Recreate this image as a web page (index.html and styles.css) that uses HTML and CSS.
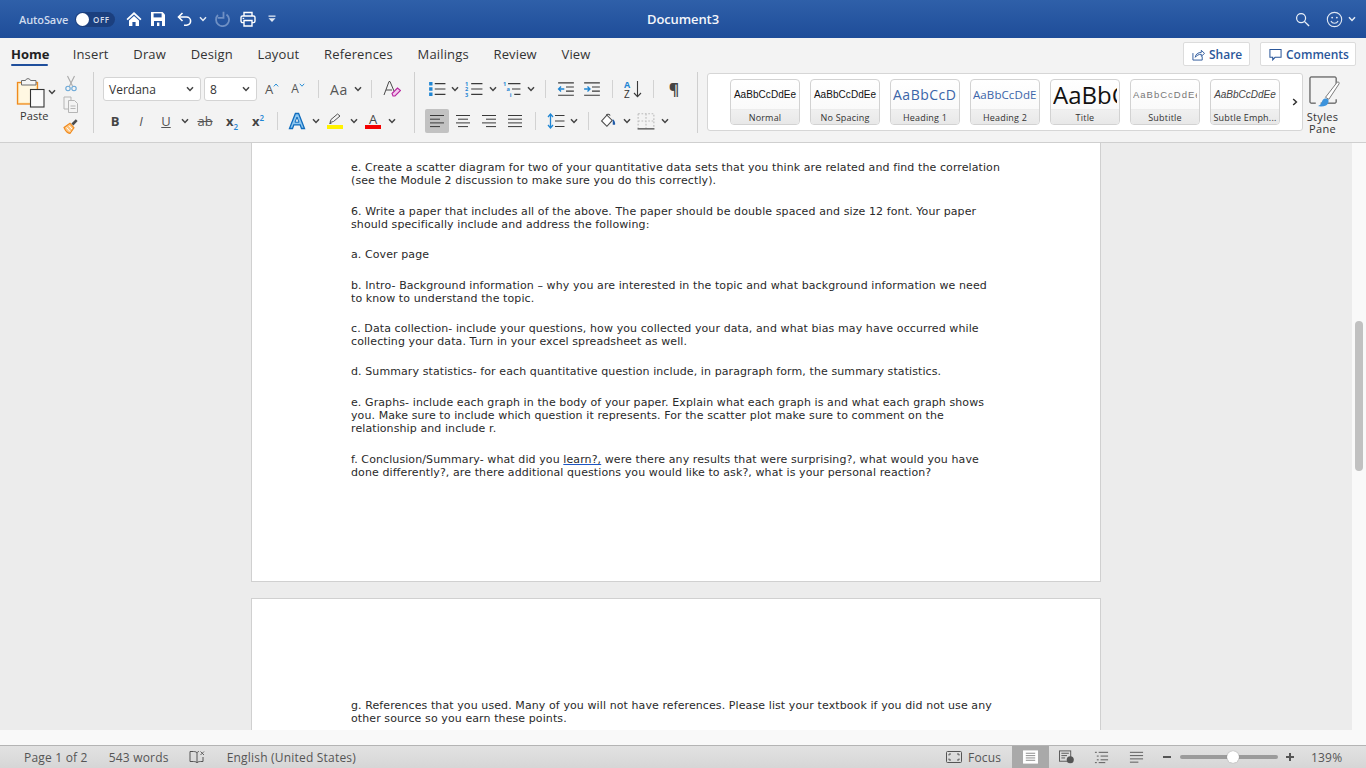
FILE: index.html
```html
<!DOCTYPE html>
<html lang="en">
<head>
<meta charset="utf-8">
<title>Document3</title>
<link rel="stylesheet" href="styles.css">
</head>
<body>
<svg class="defs" width="0" height="0" aria-hidden="true">
  <symbol id="chev" viewBox="0 0 8 6"><path d="M1 1.2 4 4.4 7 1.2" fill="none" stroke="currentColor" stroke-width="1.5"/></symbol>
  <symbol id="lines-left" viewBox="0 0 16 14"><path d="M1 1.5h14M1 5.2h10M1 8.9h14M1 12.6h10" fill="none" stroke="#3a3a3a" stroke-width="1"/></symbol>
  <symbol id="lines-center" viewBox="0 0 16 14"><path d="M1 1.5h14M3 5.2h10M1 8.9h14M3 12.6h10" fill="none" stroke="#3a3a3a" stroke-width="1"/></symbol>
  <symbol id="lines-right" viewBox="0 0 16 14"><path d="M1 1.5h14M5 5.2h10M1 8.9h14M5 12.6h10" fill="none" stroke="#3a3a3a" stroke-width="1"/></symbol>
  <symbol id="lines-just" viewBox="0 0 16 14"><path d="M1 1.5h14M1 5.2h14M1 8.9h14M1 12.6h14" fill="none" stroke="#3a3a3a" stroke-width="1"/></symbol>
</svg>

<header class="titlebar">
  <div class="qat">
    <span class="autosave">AutoSave</span>
    <span class="toggle"><span class="knob"></span><span class="off">OFF</span></span>
    <svg class="qi home" viewBox="0 0 16 16"><path d="M8 1 0.5 8l1.2 1.2L8 3.4l6.3 5.8L15.500 8z" fill="#fff"/><path d="M3 9.600 8 5l5 4.600V15H9.600v-4H6.400v4H3z" fill="#fff"/></svg>
    <svg class="qi save" viewBox="0 0 16 16"><path d="M1 1h11.500L15 3.500V15H1z" fill="#fff"/><rect x="3.600" y="2.400" width="8" height="4" fill="#24549f"/><rect x="4" y="10" width="8" height="5" fill="#24549f"/><rect x="7" y="11.500" width="2.400" height="3.500" fill="#fff"/></svg>
    <svg class="qi undo" viewBox="0 0 16 16"><path d="M5.500 2 1.500 6l4 4" fill="none" stroke="#fff" stroke-width="1.600"/><path d="M2 6h7.500a4 4 0 0 1 0 8.200H7" fill="none" stroke="#fff" stroke-width="1.600"/></svg>
    <svg class="chev qchev"><use href="#chev"/></svg>
    <svg class="qi redo" viewBox="0 0 16 16"><path d="M4 4A6.500 6.500 0 1 0 12.500 3.500" fill="none" stroke="#6f90c4" stroke-width="1.800"/><path d="M9.500 .8v6H3.800" fill="none" stroke="#6f90c4" stroke-width="1.800"/></svg>
    <svg class="qi print" viewBox="0 0 16 16"><path d="M4 5V1.500h8V5" fill="none" stroke="#fff" stroke-width="1.400"/><rect x="1" y="5" width="14" height="6.600" rx="1.500" fill="none" stroke="#fff" stroke-width="1.400"/><path d="M4 9.500h8V15H4z" fill="#24549f" stroke="#fff" stroke-width="1.400"/><rect x="2.600" y="6.800" width="1.600" height="1.200" fill="#fff"/></svg>
    <svg class="custom" viewBox="0 0 8 8"><rect x="0.500" y="0.500" width="7" height="1.300" fill="#dfe7f3"/><path d="M0.500 3.200h7L4 7z" fill="#dfe7f3"/></svg>
  </div>
  <div class="doc-title">Document3</div>
  <div class="account">
    <svg class="search" viewBox="0 0 16 16"><circle cx="6.500" cy="6.500" r="4.800" fill="none" stroke="#eaf0f8" stroke-width="1.300"/><path d="M10 10l5 5" stroke="#eaf0f8" stroke-width="1.500"/></svg>
    <svg class="smile" viewBox="0 0 18 18"><circle cx="9" cy="9" r="7.600" fill="none" stroke="#dfe7f3" stroke-width="1.200"/><circle cx="6.500" cy="7" r="1" fill="#dfe7f3"/><circle cx="11.500" cy="7" r="1" fill="#dfe7f3"/><path d="M5.200 10.500a4.200 4.200 0 0 0 7.600 0" fill="none" stroke="#dfe7f3" stroke-width="1.200"/></svg>
    <svg class="chev achev"><use href="#chev"/></svg>
  </div>
</header>

<nav class="tabs">
  <div class="tablist">
    <span class="tab active">Home</span>
    <span class="tab">Insert</span>
    <span class="tab">Draw</span>
    <span class="tab">Design</span>
    <span class="tab">Layout</span>
    <span class="tab">References</span>
    <span class="tab">Mailings</span>
    <span class="tab">Review</span>
    <span class="tab">View</span>
  </div>
  <div class="share-group">
    <span class="action share">
      <svg class="action-icon" viewBox="0 0 14 14"><path d="M1 5.500V13h10V9" fill="none" stroke="#2b579a" stroke-width="1"/><path d="M3.500 10c.4-3.500 3-5.200 6.500-5.200V2.500L13.500 5.800 10 9V6.800C7.500 6.800 5.200 7.600 3.500 10z" fill="none" stroke="#2b579a" stroke-width="1"/></svg>
      Share
    </span>
    <span class="action comments">
      <svg class="action-icon" viewBox="0 0 14 14"><path d="M1 1.500h12v8.500H6.500L4 12.800V10H1z" fill="none" stroke="#2b579a" stroke-width="1.100"/></svg>
      Comments
    </span>
  </div>
</nav>

<section class="ribbon">
  <div class="group paste-group">
    <div class="paste">
      <svg class="paste-icon" viewBox="0 0 30 32">
        <rect x="1.500" y="6.500" width="20" height="21.500" fill="#fde9b8" stroke="#f08a1d" stroke-width="1.300"/>
        <rect x="3.200" y="8" width="16.600" height="18.500" fill="#fff7e2"/>
        <path d="M5.500 9V4.500h4a2.600 2.600 0 0 1 5 0H20V9z" fill="#f5f5f5" stroke="#6d6d6d" stroke-width="1"/>
        <rect x="14.500" y="13.500" width="13.500" height="17.500" fill="#fafafa" stroke="#333" stroke-width="1.100"/>
      </svg>
      <svg class="chev paste-chev"><use href="#chev"/></svg>
      <span class="paste-label">Paste</span>
    </div>
    <div class="clip">
      <svg class="clip-icon" viewBox="0 0 16 17"><path d="M4.500 1 9.500 11M11.500 1 6.500 11" stroke="#a9a9a9" stroke-width="1.100"/><circle cx="5" cy="13.500" r="2.200" fill="none" stroke="#6aa8d8" stroke-width="1.100"/><circle cx="11" cy="13.500" r="2.200" fill="none" stroke="#6aa8d8" stroke-width="1.100"/></svg>
      <svg class="clip-icon" viewBox="0 0 16 17"><path d="M1 1h7v3M1 1v12h4" fill="none" stroke="#b5b5b5" stroke-width="1"/><path d="M5.500 4.500h6l3 3v9h-9z" fill="none" stroke="#b5b5b5" stroke-width="1"/><path d="M7.500 10h5M7.500 12.500h5" stroke="#b5b5b5"/></svg>
      <svg class="clip-icon" viewBox="0 0 16 17"><path d="M1 10.500 7 6.200l4 4.600-4 5.600c-2-.2-4.600-2.400-6-5.900z" fill="#fdc37c" stroke="#f08a1d" stroke-width="1.100"/><path d="M3.500 10.500l3.600 4M6 8.700l3 3.400" stroke="#fff" stroke-width="1"/><path d="M8.400 6.600 12.800 2.200l1.800 1.800-4.200 4.600z" fill="#4b4b4b"/></svg>
    </div>
  </div>
  <span class="vrule"></span>

  <div class="group font-group">
    <div class="row">
      <span class="select font-select">Verdana<svg class="chev sel-chev"><use href="#chev"/></svg></span>
      <span class="select size-select">8<svg class="chev sel-chev"><use href="#chev"/></svg></span>
      <span class="slot w30"><span class="big-a">A</span><svg class="caret" viewBox="0 0 6 4"><path d="M.8 3.400 3 1l2.200 2.400" fill="none" stroke="#2a8fd6" stroke-width="1"/></svg></span>
      <span class="slot w22"><span class="big-a small">A</span><svg class="caret" viewBox="0 0 6 4"><path d="M.8.8 3 3.200 5.200.8" fill="none" stroke="#2a8fd6" stroke-width="1"/></svg></span>
      <span class="rule ml9"></span>
      <span class="slot w30 ml5 aa">Aa</span>
      <span class="slot w8"><svg class="chev"><use href="#chev"/></svg></span>
      <span class="rule ml9"></span>
      <span class="slot w30 ml5">
        <svg class="icon18" viewBox="0 0 18 18"><path d="M1 15 6 1.500h1L11 11M3 10h6" fill="none" stroke="#4a4a4a" stroke-width="1"/><path d="M9 13.500 14.500 8l3 2.500-5.500 5.500H10z" fill="#f3c9ee" stroke="#b8249f" stroke-width="1.100"/></svg>
      </span>
    </div>
    <div class="row fmt">
      <span class="slot w24 bold">B</span>
      <span class="slot w28 ital">I</span>
      <span class="slot w22 under">U</span>
      <span class="slot w16"><svg class="chev"><use href="#chev"/></svg></span>
      <span class="slot w24 strike">ab</span>
      <span class="slot w30 script"><span>x<sub>2</sub></span></span>
      <span class="slot w22 script"><span>x<sup>2</sup></span></span>
      <span class="rule ml8"></span>
      <span class="slot w38">
        <svg class="icon18" viewBox="0 0 18 18"><path d="M1.500 16.500 7.400 1.500h3.200l5.900 15h-3l-1.300-3.600H5.800l-1.300 3.600z" fill="#8cc6f0" stroke="#0f6cbd" stroke-width="1.300"/><path d="M7 10.200h4L9 5z" fill="#f3f3f3" stroke="#0f6cbd"/></svg>
      </span>
      <span class="slot w0"><svg class="chev"><use href="#chev"/></svg></span>
      <span class="slot w38">
        <span class="colour">
          <svg class="pen" viewBox="0 0 14 11"><path d="M2 9.500 3 6.500 9.500 1l2.500 2-6.500 5.500z" fill="none" stroke="#555" stroke-width="1"/><path d="M2 9.500 1 11h3z" fill="#555"/></svg>
          <span class="bar yellow"></span>
        </span>
      </span>
      <span class="slot w0"><svg class="chev"><use href="#chev"/></svg></span>
      <span class="slot w38">
        <span class="colour"><span class="colour-a">A</span><span class="bar red"></span></span>
      </span>
      <span class="slot w0"><svg class="chev"><use href="#chev"/></svg></span>
    </div>
  </div>
  <span class="vrule"></span>

  <div class="group para-group">
    <div class="row para-top">
      <span class="slot w24 ml10">
        <svg class="icon18" viewBox="0 0 16 14"><path d="M1 .8h3v3H1zM1 5.500h3v3H1zM1 10.200h3v3H1z" fill="#1f86d4"/><path d="M6 2.200h9.500M6 7h9.500M6 11.700h9.500" stroke="#3a3a3a" stroke-width="1.100"/></svg>
      </span>
      <span class="slot w12"><svg class="chev"><use href="#chev"/></svg></span>
      <span class="slot w26">
        <svg class="icon18" viewBox="0 0 16 14"><text x="0" y="4.400" class="tiny">1</text><text x="0" y="9.200" class="tiny">2</text><text x="0" y="14" class="tiny">3</text><path d="M5.500 2.200h10M5.500 7h10M5.500 11.700h10" stroke="#3a3a3a" stroke-width="1.100"/></svg>
      </span>
      <span class="slot w12"><svg class="chev"><use href="#chev"/></svg></span>
      <span class="slot w26">
        <svg class="icon18" viewBox="0 0 16 14"><text x="0" y="4.400" class="tiny">1</text><text x="3" y="9.200" class="tiny">a</text><text x="6" y="14" class="tiny">i</text><path d="M4.500 2.200h11M8 7h7.500M10 11.700h5.500" stroke="#3a3a3a" stroke-width="1.100"/></svg>
      </span>
      <span class="slot w12"><svg class="chev"><use href="#chev"/></svg></span>
      <span class="rule ml8"></span>
      <span class="slot w26 ml7">
        <svg class="icon18" viewBox="0 0 16 14"><path d="M1 1.500h14M8 5.200h7M8 8.900h7M1 12.600h14" stroke="#3a3a3a"/><path d="M6.500 7H1.500M3.600 4.800 1.400 7l2.200 2.200" fill="none" stroke="#1f86d4" stroke-width="1.200"/></svg>
      </span>
      <span class="slot w26">
        <svg class="icon18" viewBox="0 0 16 14"><path d="M1 1.500h14M8 5.200h7M8 8.900h7M1 12.600h14" stroke="#3a3a3a"/><path d="M1 7h5M4 4.800 6.200 7 4 9.200" fill="none" stroke="#1f86d4" stroke-width="1.200"/></svg>
      </span>
      <span class="rule ml7"></span>
      <span class="slot w40">
        <svg class="sort" viewBox="0 0 18 18"><text x="0" y="8" class="sort-a">A</text><text x="0" y="17.500" class="sort-z">Z</text><path d="M13.500 1v15.500M10 13l3.500 3.700L17 13" fill="none" stroke="#3a3a3a" stroke-width="1.100"/></svg>
      </span>
      <span class="rule"></span>
      <span class="slot w40 pilcrow">¶</span>
    </div>
    <div class="row para-bottom">
      <span class="align on"><svg class="icon16"><use href="#lines-left"/></svg></span>
      <span class="align"><svg class="icon16"><use href="#lines-center"/></svg></span>
      <span class="align"><svg class="icon16"><use href="#lines-right"/></svg></span>
      <span class="align"><svg class="icon16"><use href="#lines-just"/></svg></span>
      <span class="rule ml8"></span>
      <span class="slot w28 ml6">
        <svg class="icon18" viewBox="0 0 18 16"><path d="M3.500 1v14M1 4l2.500-3L6 4M1 12l2.500 3L6 12" fill="none" stroke="#1f86d4" stroke-width="1.300"/><path d="M8 2.500h9.500M8 8h9.500M8 13.500h9.500" stroke="#3a3a3a" stroke-width="1.100"/></svg>
      </span>
      <span class="slot w8"><svg class="chev"><use href="#chev"/></svg></span>
      <span class="rule ml10"></span>
      <span class="slot w38">
        <svg class="bucket" viewBox="0 0 16 15"><path d="M6.500 2 1.500 7.500 6.500 12.500l5-5.500z" fill="#fff" stroke="#4a4a4a"/><path d="M6 2c1-1.500 3-1 3.500.5" fill="none" stroke="#4a4a4a"/><path d="M12 5.500c1.800 1.500 2.500 3.500 2.200 5.500H12z" fill="#1e5aa8"/></svg>
      </span>
      <span class="slot w0"><svg class="chev"><use href="#chev"/></svg></span>
      <span class="slot w38">
        <svg class="icon18" viewBox="0 0 16 15"><path d="M1 1h14v13" fill="none" stroke="#bdbdbd" stroke-dasharray="1.500 1.500"/><path d="M1 1v13M8 1v13M1 7.500h14" fill="none" stroke="#bdbdbd" stroke-dasharray="1.500 1.500"/><path d="M.5 14.500h15" stroke="#333"/></svg>
      </span>
      <span class="slot w0"><svg class="chev"><use href="#chev"/></svg></span>
    </div>
  </div>
  <span class="vrule"></span>

  <div class="gallery">
    <div class="card"><div class="sample s-normal">AaBbCcDdEe</div><div class="card-label">Normal</div></div>
    <div class="card"><div class="sample s-normal">AaBbCcDdEe</div><div class="card-label">No Spacing</div></div>
    <div class="card"><div class="sample s-h1">AaBbCcDdEe</div><div class="card-label">Heading 1</div></div>
    <div class="card"><div class="sample s-h2">AaBbCcDdEe</div><div class="card-label">Heading 2</div></div>
    <div class="card"><div class="sample s-title">AaBbCcDdEe</div><div class="card-label">Title</div></div>
    <div class="card"><div class="sample s-sub">AaBbCcDdEe</div><div class="card-label">Subtitle</div></div>
    <div class="card"><div class="sample s-emph">AaBbCcDdEe</div><div class="card-label">Subtle Emph...</div></div>
    <svg class="chev gallery-next"><use href="#chev"/></svg>
  </div>
  <div class="styles-pane">
    <svg class="pane-icon" viewBox="0 0 32 32">
      <path d="M2 1h25a1 1 0 0 1 1 1v6M28 24v3a1 1 0 0 1-1 1H12M7 28H2a1 1 0 0 1-1-1V2a1 1 0 0 1 1-1" fill="none" stroke="#333" stroke-width="1"/>
      <path d="M17 22 29 6.500c1-1.200 2.800.3 2 1.600L20.500 24z" fill="#fff" stroke="#777" stroke-width="1"/>
      <path d="M9 31c3-.5 3.600-3 5-6 1-2 4-2.500 5.500-1 1.500 2 .5 5-2 6.500-2.500 1-6 1.200-8.500.5z" fill="#3c93dc"/>
    </svg>
    <span>Styles</span>
    <span>Pane</span>
  </div>
</section>

<main class="workspace">
  <div class="doc">
    <article class="page page-one">
      <p>e. Create a scatter diagram for two of your quantitative data sets that you think are related and find the correlation<br>(see the Module 2 discussion to make sure you do this correctly).</p>
      <p class="tight">6. Write a paper that includes all of the above. The paper should be double spaced and size 12 font. Your paper<br>should specifically include and address the following:</p>
      <p>a. Cover page</p>
      <p class="tight">b. Intro- Background information – why you are interested in the topic and what background information we need<br>to know to understand the topic.</p>
      <p class="tight">c. Data collection- include your questions, how you collected your data, and what bias may have occurred while<br>collecting your data. Turn in your excel spreadsheet as well.</p>
      <p>d. Summary statistics- for each quantitative question include, in paragraph form, the summary statistics.</p>
      <p>e. Graphs- include each graph in the body of your paper. Explain what each graph is and what each graph shows<br>you. Make sure to include which question it represents. For the scatter plot make sure to comment on the<br>relationship and include r.</p>
      <p>f. Conclusion/Summary- what did you <span class="flag">learn?,</span> were there any results that were surprising?, what would you have<br>done differently?, are there additional questions you would like to ask?, what is your personal reaction?</p>
    </article>
    <article class="page page-two">
      <p>g. References that you used. Many of you will not have references. Please list your textbook if you did not use any<br>other source so you earn these points.</p>
    </article>
  </div>
  <div class="scrolltrack"><span class="thumb"></span></div>
</main>
<div class="strip"></div>

<footer class="status">
  <span class="st page-count">Page 1 of 2</span>
  <span class="st words">543 words</span>
  <svg class="proof" viewBox="0 0 16 14"><path d="M1 1.500h3.500C6 1.500 8 2 8 3v10c0-1-2-1.500-3.500-1.500H1zM8 3c0-.8 1-1.500 2-1.500M8 13c0-1 2-1.500 3.500-1.500H14V7" fill="none" stroke="#555" stroke-width="1"/><path d="M11.500 1.500l3.500 3.500M15 1.500 11.500 5" stroke="#555" stroke-width=".9"/></svg>
  <span class="st lang">English (United States)</span>
  <span class="status-spacer"></span>
  <svg class="focus-icon" viewBox="0 0 16 12"><rect x=".5" y=".5" width="15" height="11" rx="1" fill="none" stroke="#555"/><path d="M3 4.500V3h2M11 3h2v1.500M3 7.500V9h2M11 9h2V7.500" fill="none" stroke="#555"/></svg>
  <span class="st focus">Focus</span>
  <span class="view active"><svg class="view-icon" viewBox="0 0 16 14"><rect x=".5" y=".5" width="15" height="13" fill="#fff" stroke="#fff"/><path d="M3 3h10M3 5.500h10M3 8h10M3 10.500h10" stroke="#888"/></svg></span>
  <span class="view"><svg class="view-icon" viewBox="0 0 16 14"><rect x=".5" y=".5" width="12" height="11" fill="none" stroke="#555"/><path d="M2.500 3h8M2.500 5.500h6M2.500 8h4" stroke="#555"/><circle cx="12" cy="10" r="3.800" fill="#555"/></svg></span>
  <span class="view"><svg class="view-icon" viewBox="0 0 16 14"><path d="M1 2h2M5 2h10M3 6h2M7 6h8M3 10h2M7 10h8M1 13h2M5 13h7" stroke="#555" fill="none"/></svg></span>
  <span class="view"><svg class="view-icon" viewBox="0 0 16 14"><path d="M1 2h14M1 5.500h14M1 9h14M1 12.500h9" stroke="#555" fill="none"/></svg></span>
  <span class="zoom-minus"></span>
  <span class="slider"><span class="slider-thumb"></span></span>
  <span class="zoom-plus"></span>
  <span class="st pct">139%</span>
</footer>
</body>
</html>
```

FILE: styles.css
```css
* { box-sizing: border-box; }
html, body { margin: 0; padding: 0; height: 100%; }
body {
  width: 1366px; height: 768px; overflow: hidden;
  display: flex; flex-direction: column;
  font-family: "Open Sans", "Liberation Sans", sans-serif;
  color: #333; background: #f3f3f3;
}
.defs { position: absolute; }
svg { display: block; flex: none; }
.chev { width: 8px; height: 6px; color: #444; }

/* title bar */
.titlebar {
  height: 38px; flex: none; display: flex; align-items: center; position: relative;
  background: linear-gradient(#2f60a9, #1e4d99);
  color: #fff;
}
.qat { display: flex; align-items: center; padding-left: 19px; }
.autosave { font-size: 11px; font-weight: 600; color: #d0dcee; width: 56px; letter-spacing: -.1px; }
.toggle {
  width: 40px; height: 15px; border-radius: 8px; background: #1b3f7e;
  display: flex; align-items: center; padding-left: 1px;
}
.knob { width: 13px; height: 13px; border-radius: 50%; background: #fff; }
.off { font-size: 8px; color: #d5deed; margin-left: 4px; letter-spacing: .6px; font-weight: 600; }
.qi { width: 16px; height: 16px; }
.home { margin-left: 11px; }
.save { margin-left: 8px; }
.undo { margin-left: 11px; }
.qchev { color: #e4ebf5; margin-left: 6px; }
.redo { margin-left: 7px; }
.print { margin-left: 10px; }
.custom { width: 8px; height: 8px; margin-left: 12px; }
.doc-title {
  position: absolute; left: 0; right: 0; text-align: center;
  font-size: 13px; font-weight: 600; color: #f4f6fb; letter-spacing: -.1px;
}
.account { margin-left: auto; display: flex; align-items: center; padding-right: 10px; }
.search { width: 15px; height: 15px; }
.smile { width: 17px; height: 17px; margin-left: 16px; }
.achev { color: #e4ebf5; margin-left: 5px; }

/* tabs */
.tabs {
  height: 32px; flex: none; display: flex; justify-content: space-between;
  background: #f3f3f3; padding: 4px 10px 0 11px;
}
.tablist { display: flex; gap: 24.700px; }
.tab { font-size: 13px; line-height: 24px; height: 24px; color: #333; letter-spacing: .15px; }
.tab.active { font-weight: 700; color: #222; position: relative; letter-spacing: 0; width: 37px; }
.tab.active::after {
  content: ""; position: absolute; left: 0; right: 0; bottom: 0; height: 2.500px;
  background: #1f4f9c; border-radius: 1px;
}
.share-group { display: flex; gap: 10px; }
.action {
  height: 24px; display: flex; align-items: center; gap: 4px; padding: 0 6px 0 8px;
  background: #fff; border: 1px solid #dcdcdc; border-radius: 2px;
  color: #2b579a; font-size: 12px; font-weight: 600;
}
.share { width: 67px; }
.comments { width: 96px; }
.action-icon { width: 13px; height: 13px; }

/* ribbon */
.ribbon {
  height: 73px; flex: none; display: flex; align-items: flex-start;
  background: #f3f3f3; border-bottom: 1px solid #cfcfcf;
}
.group { height: 100%; }
.vrule { width: 1px; height: 61px; margin-top: 2px; background: #cfcfcf; flex: none; }
.paste-group { width: 93px; display: flex; padding-top: 2px; }
.paste { width: 63px; position: relative; padding: 4px 0 0 16px; }
.paste-icon { width: 30px; height: 32px; }
.paste-chev { position: absolute; left: 48px; top: 17px; }
.paste-label { display: block; font-size: 11px; margin: 0 0 0 4px; color: #333; letter-spacing: .1px; }
.clip { display: flex; flex-direction: column; gap: 4px; padding-top: 3px; }
.clip-icon { width: 16px; height: 17px; }

.font-group { width: 311px; margin-left: 9px; padding-top: 7px; }
.para-group { width: 282px; padding-top: 7px; }
.row { display: flex; align-items: center; height: 24px; }
.fmt, .para-bottom { margin-top: 8px; }
.select {
  height: 24px; background: #fff; border: 1px solid #d4d4d4; border-radius: 3px;
  display: flex; align-items: center; justify-content: space-between;
  padding: 0 6px 0 5px; font-size: 12px; color: #333; font-family: "Open Sans", sans-serif;
}
.font-select { width: 98px; margin-right: 3px; }
.size-select { width: 53px; }
.slot { display: flex; align-items: center; justify-content: center; flex: none; height: 24px; position: relative; }
.w0 { width: 0; } .w8 { width: 8px; } .w12 { width: 12px; } .w16 { width: 16px; }
.w22 { width: 22px; } .w24 { width: 24px; } .w26 { width: 26px; } .w28 { width: 28px; }
.w30 { width: 30px; } .w38 { width: 38px; } .w40 { width: 40px; }
.ml5 { margin-left: 5px; } .ml6 { margin-left: 6px; }
.ml7 { margin-left: 7px; } .ml8 { margin-left: 8px; } .ml9 { margin-left: 9px; } .ml10 { margin-left: 10px; }
.rule { width: 1px; height: 18px; background: #d2d2d2; flex: none; }
.big-a { font-size: 13px; color: #555; line-height: 1; }
.big-a.small { font-size: 12px; }
.caret { width: 6px; height: 4px; margin: -8px 0 0 0; }
.aa { font-size: 14px; color: #555; letter-spacing: .6px; }
.icon18 { width: 18px; height: 18px; }
.bucket { width: 17px; height: 16px; }
.icon16 { width: 16px; height: 14px; }
.bold { font-weight: 700; font-size: 13px; color: #444; }
.ital { font-style: italic; font-size: 13px; color: #555; }
.under { font-size: 13px; color: #555; text-decoration: underline; }
.strike { font-size: 13px; color: #555; text-decoration: line-through; }
.script { font-size: 13px; font-weight: 700; color: #444; }
.script sub, .script sup { font-size: 8px; color: #1f86d4; font-weight: 600; line-height: 0; }
.colour { display: flex; flex-direction: column; align-items: center; width: 17px; }
.pen { width: 14px; height: 11px; margin-bottom: 1px; }
.colour-a { font-size: 13px; line-height: 12px; color: #444; }
.bar { width: 16px; height: 4px; display: block; }
.yellow { background: #fff200; }
.red { background: #f40000; }
.tiny { font: 700 5px "Open Sans", sans-serif; fill: #1f86d4; }
.sort { width: 18px; height: 18px; }
.sort-a { font: 700 9px "Open Sans", sans-serif; fill: #1f86d4; }
.sort-z { font: 400 10px "Open Sans", sans-serif; fill: #333; }
.pilcrow { font-size: 16px; font-weight: 700; color: #444; }
.align { width: 24px; height: 24px; margin-left: 2px; display: flex; align-items: center; justify-content: center; border-radius: 2px; flex: none; }
.align:first-child { margin-left: 10px; }
.align.on { background: #c2c2c2; }

/* gallery */
.gallery {
  width: 596px; height: 58px; margin: 3px 0 0 9px; flex: none;
  background: #fff; border: 1px solid #d6d6d6; border-radius: 3px;
  display: flex; gap: 10px; padding: 5px 0 0 22px; position: relative;
}
.card {
  width: 70px; height: 46px; flex: none; border: 1px solid #d2d2d2; border-radius: 4px;
  background: linear-gradient(#ffffff, #f7f7f7); overflow: hidden;
  display: flex; flex-direction: column;
}
.sample { height: 30px; line-height: 30px; white-space: nowrap; overflow: hidden; margin: 0 2px; color: #222; font-family: "Liberation Sans", sans-serif; text-align: center; }
.s-normal { font-size: 10px; color: #111; letter-spacing: .05px; }
.s-h1 { font-size: 14px; color: #3a64a8; text-align: left; font-family: "Open Sans", sans-serif; letter-spacing: .5px; }
.s-h2 { font-size: 11.500px; color: #3a64a8; text-align: left; font-family: "Open Sans", sans-serif; letter-spacing: .1px; }
.s-title { font-size: 24px; color: #111; text-align: left; font-family: "Open Sans", sans-serif; }
.s-sub { font-size: 9.500px; color: #777; letter-spacing: 1px; text-align: left; }
.s-emph { font-size: 10px; color: #444; font-style: italic; }
.card-label {
  height: 15px; line-height: 15px; font-size: 9px; text-align: center; color: #333;
  background: linear-gradient(#f0f0f0, #e8e8e8); border-top: 1px solid #ececec; letter-spacing: .2px;
}
.gallery-next { width: 8px; height: 6px; position: absolute; left: 583px; top: 25px; transform: rotate(-90deg); color: #333; }
.styles-pane {
  width: 37px; margin-left: 1px; display: flex; flex-direction: column; align-items: center;
  font-size: 11px; line-height: 12px; color: #333; padding-top: 6px; flex: none; letter-spacing: .3px;
}
.pane-icon { width: 31px; height: 31px; margin-bottom: 4px; margin-left: 3px; }

/* document */
.workspace { flex: 1; min-height: 0; display: flex; background: #ececec; overflow: hidden; }
.doc { flex: 1; min-width: 0; overflow: hidden; padding-left: 251px; }
.page {
  width: 850px; background: #fff;
  border: 1px solid #d0d0d0;
  padding-left: 99px;
  font-family: "DejaVu Sans", Verdana, sans-serif;
  font-size: 11px; line-height: 13px; color: #2a2a2a; letter-spacing: .095px;
  white-space: nowrap;
}
.page p { margin: 0 0 18px; }
.page p.tight { margin-bottom: 17px; }
.page-one { height: 439px; padding-top: 18px; border-top: 0; }
.page-two { height: 200px; margin-top: 16px; padding-top: 100px; }
.flag { text-decoration: underline; text-decoration-color: #1d55c4; }
.scrolltrack { width: 14px; flex: none; background: #f9f9f9; padding: 178px 3px 0; }
.thumb { display: block; width: 8px; height: 150px; border-radius: 4px; background: #c1c1c1; }
.strip { height: 15px; flex: none; background: #f9f9f9; }

/* status bar */
.status {
  height: 23px; flex: none; display: flex; align-items: center;
  background: linear-gradient(#e2e2e2, #d6d6d6); border-top: 1px solid #b4b4b4;
  padding-left: 24px; color: #555; font-size: 12px;
}
.st { letter-spacing: .2px; white-space: nowrap; }
.words { margin-left: 21px; }
.proof { width: 16px; height: 14px; margin-left: 20px; }
.lang { margin-left: 22px; }
.status-spacer { flex: 1; }
.focus-icon { width: 16px; height: 12px; }
.focus { margin-left: 6px; width: 44px; }
.view { width: 35px; height: 22px; display: flex; align-items: center; justify-content: center; flex: none; }
.view.active { background: #a9a9a9; width: 37px; }
.view-icon { width: 15px; height: 14px; }
.zoom-minus, .zoom-plus { width: 8px; height: 2px; background: #555; flex: none; position: relative; margin-left: 9px; }
.zoom-plus::after { content: ""; position: absolute; left: 3px; top: -3px; width: 2px; height: 8px; background: #555; }
.zoom-plus { margin-left: 8px; }
.slider { width: 98px; height: 4px; margin-left: 9px; border-radius: 2px; background: #9b9b9b; position: relative; flex: none; }
.slider-thumb { position: absolute; left: 47px; top: -4px; width: 12px; height: 12px; border-radius: 50%; background: #fff; box-shadow: 0 0 1px #777; }
.pct { margin-left: 17px; width: 55px; }
```
